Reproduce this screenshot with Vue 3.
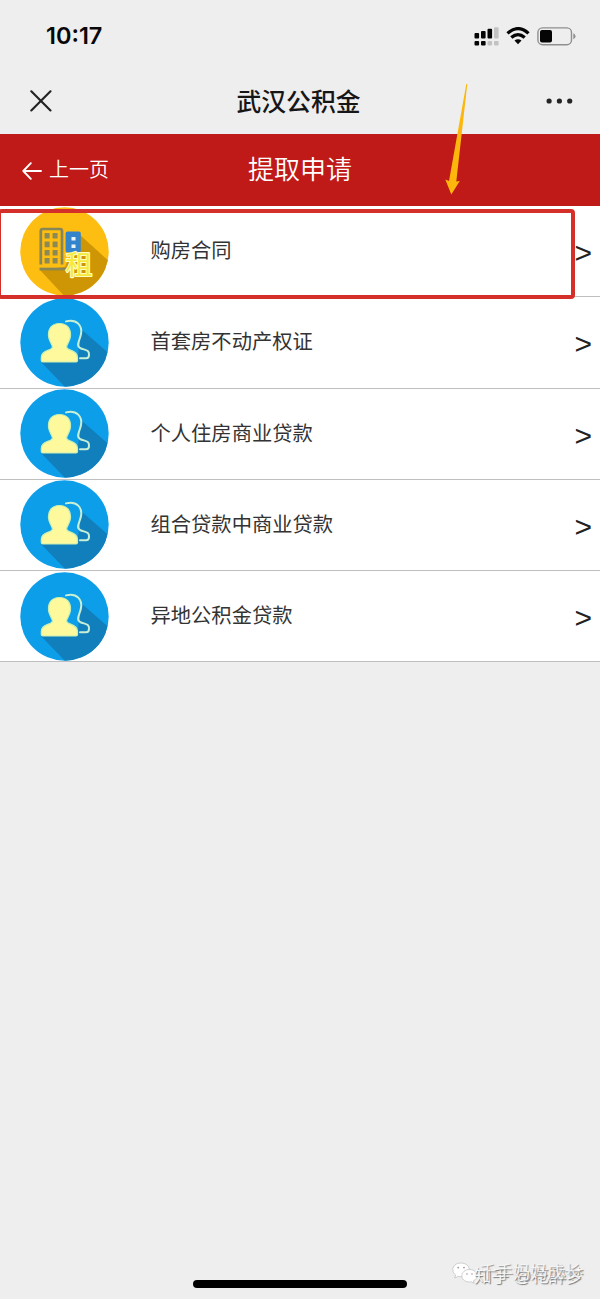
<script setup>
const items = [
  { label: '购房合同', rent: true },
  { label: '首套房不动产权证' },
  { label: '个人住房商业贷款' },
  { label: '组合贷款中商业贷款' },
  { label: '异地公积金贷款' },
]
const windowRows = [26, 34.6, 43, 51]
</script>

<template>
  <div class="screen">
    <header class="status">
      <span class="time">10:17</span>
      <div class="indicators">
        <svg class="signal" width="25" height="19" viewBox="0 0 25 19">
          <g fill="#050505">
            <rect x=".5" y="6" width="4.6" height="5.6" rx="1" />
            <rect x="7" y="4" width="4.6" height="7.6" rx="1" />
            <rect x="13.5" y="1.8" width="4.6" height="9.8" rx="1" />
            <rect x=".5" y="14" width="4.6" height="4.6" rx="1" />
            <rect x="7" y="14" width="4.6" height="4.6" rx="1" />
          </g>
          <g fill="#c2c2c2">
            <rect x="20" y=".2" width="4.6" height="11.4" rx="1" />
            <rect x="13.5" y="14" width="4.6" height="4.6" rx="1" />
            <rect x="20" y="14" width="4.6" height="4.6" rx="1" />
          </g>
        </svg>
        <svg class="wifi" width="24" height="18" viewBox="0 0 24 18">
          <g fill="none" stroke="#050505" stroke-width="3.3">
            <path d="M1.5 6.4Q12-3.1 22.5 6.4" />
            <path d="M5.3 10.6Q12 4.6 18.7 10.6" />
          </g>
          <path d="M8.5 13.6Q12 10.8 15.5 13.6L12 17.3Z" fill="#050505" />
        </svg>
        <svg class="battery" width="39" height="19" viewBox="0 0 39 19">
          <rect x=".9" y=".9" width="33.6" height="16.8" rx="4.6" fill="none" stroke="#8f8f8f" stroke-width="1.4" />
          <rect x="3" y="3" width="12" height="12.4" rx="2" fill="#050505" />
          <path d="M36.3 6.3Q38.5 7.2 38.5 9.3T36.3 12.3Z" fill="#8f8f8f" />
        </svg>
      </div>
    </header>

    <div class="titlebar">
      <svg class="close" width="22" height="22" viewBox="0 0 22 22">
        <path d="M1.3 1.3 20.5 20.5M20.5 1.3 1.3 20.5" stroke="#222" stroke-width="2.1" stroke-linecap="round" />
      </svg>
      <h1>武汉公积金</h1>
      <svg class="more" width="28" height="6" viewBox="0 0 28 6">
        <g fill="#242424"><circle cx="3.1" cy="3" r="2.6" /><circle cx="13.4" cy="3" r="2.6" /><circle cx="23.7" cy="3" r="2.6" /></g>
      </svg>
    </div>

    <nav class="navbar">
      <div class="back">
        <svg width="20" height="18" viewBox="0 0 20 18">
          <path d="M8.8 1.2 1.3 9l7.5 7.8M1.3 9H19" fill="none" stroke="#fff" stroke-width="1.9" stroke-linecap="round" stroke-linejoin="round" />
        </svg>
        <span>上一页</span>
      </div>
      <h2>提取申请</h2>
    </nav>

    <main class="list">
      <div v-for="item in items" :key="item.label" class="row">
        <svg v-if="item.rent" class="icon" viewBox="0 0 89 89">
          <clipPath id="rentDisc"><circle cx="44.5" cy="44.5" r="44.2" /></clipPath>
          <circle cx="44.5" cy="44.5" r="44.2" fill="#fdbd11" />
          <path clip-path="url(#rentDisc)" d="M59 27 92 57V92H47L20 63 45 60Z" fill="#ce9604" />
          <path d="M20.8 57.5V24Q20.8 22 22.8 22H40Q42 22 42 24V57.5" fill="none" stroke="#878658" stroke-width="2.7" />
          <path d="M19.5 62H46" stroke="#878658" stroke-width="2.7" />
          <g fill="#8b8956">
            <template v-for="y in windowRows" :key="y">
              <rect x="24.6" :y="y" width="5" height="5.6" rx=".5" />
              <rect x="32.6" :y="y" width="5" height="5.6" rx=".5" />
            </template>
          </g>
          <rect x="45.6" y="24.5" width="15.2" height="21" rx="2" fill="#3484cb" />
          <path d="M51.5 30h4v3.6h-4zM51.5 37.5h4v3.6h-4z" fill="#e9f5fb" />
          <text class="rent-mark" x="45.5" y="67.5">租</text>
        </svg>
        <svg v-else class="icon" viewBox="0 0 89 89">
          <clipPath id="peopleDisc"><circle cx="44.5" cy="44.5" r="44.2" /></clipPath>
          <circle cx="44.5" cy="44.5" r="44.2" fill="#0d9ee9" />
          <path clip-path="url(#peopleDisc)" d="M61 31 92 58V92H48L21 64 58 57Z" fill="#127fbd" />
          <path d="M46 23.4C57 20.5 62.6 28 61 36C60 42 55.5 47.5 60 50C65 52.3 69.5 51.5 69 57Q69 60.2 66 60.2H60" fill="none" stroke="#c7efd5" stroke-width="2" stroke-linecap="round" />
          <path d="M39.5 25.5C47.5 25.5 51 31 50.5 38C50.2 43 46.8 46 46.6 49C46.6 53 57.5 51.3 57.5 59.5V62.5Q57.5 64 56 64H22.8Q21.3 64 21.3 62.5V59.5C21.3 51.3 32.4 53 32.4 49C32.2 46 28.8 43 28.5 38C28 31 31.5 25.5 39.5 25.5Z" fill="#fdf99c" stroke="#c7efb3" stroke-width="1.2" />
        </svg>
        <span class="label">{{ item.label }}</span>
        <span class="chevron">&gt;</span>
      </div>
      <div class="highlight"></div>
    </main>

    <svg class="pointer" width="34" height="114" viewBox="0 0 34 114">
      <path d="M21.3 1 22.3 1 11.3 98.5 14.8 98 6.3 111.5 .3 96.5 4 98Z" fill="#fdb70c" />
    </svg>

    <div class="watermark">
      <svg width="27" height="22" viewBox="0 0 27 22">
        <g fill="#fff" stroke="#bcbcbc" stroke-width=".7">
          <path d="M9 1C4 1 .8 4 .8 7.7c0 2.3 1.1 4 2.8 5.2L2.8 16l3.3-1.6c5.8 1.5 11.2-1.7 11.2-6.8C17.3 4 13.6 1 9 1Z" />
          <path d="M17.5 7.5c-4.5 0-7.7 2.8-7.7 6.3 0 4.2 4.5 7 9.5 6l2.8 1.5-.7-2.5c2.5-1.3 3.8-3 3.8-5 0-3.5-3.2-6.3-7.7-6.3Z" />
        </g>
        <g fill="#999"><circle cx="6.2" cy="5.6" r=".9" /><circle cx="12" cy="5.6" r=".9" /><circle cx="15" cy="12" r=".8" /><circle cx="20" cy="12" r=".8" /></g>
      </svg>
      <span class="mark-front">知乎 @花醉梦</span>
      <span class="mark-back">千手妈妈成长</span>
    </div>
    <div class="home"></div>
  </div>
</template>

<style>
body { background: #eee; }
</style>

<style scoped>
.screen {
  position: relative;
  height: 1299px;
  overflow: hidden;
  background: #eee;
  color: #333;
  font-family: "Liberation Sans", "Noto Sans CJK SC", sans-serif;
}
h1, h2 { margin: 0; }
.status {
  height: 69px;
  display: flex;
  justify-content: space-between;
  box-sizing: border-box;
  padding: 22px 24px 0 46px;
}
.time { font: 600 23.5px/28px Inter, sans-serif; color: #080808; }
.indicators { display: flex; align-items: flex-start; padding-top: 5px; }
.wifi { margin-left: 7px; }
.battery { margin-left: 7px; }
.titlebar {
  height: 64.5px;
  display: grid;
  grid-template-columns: 1fr auto 1fr;
  align-items: center;
  padding: 0 26px 0 30px;
}
.titlebar h1 { font-size: 24.8px; font-weight: 500; line-height: 36px; color: #161616; margin: 4px 7px 0 0; }
.more { justify-self: end; }
.navbar {
  height: 72.5px;
  display: grid;
  grid-template-columns: 1fr auto 1fr;
  align-items: center;
  background: #c01a18;
  color: #fff;
  padding: 0 22px;
}
.back { display: flex; align-items: center; gap: 7px; font-size: 20px; line-height: 28px; font-weight: 350; }
.back svg { margin-top: 3px; }
.back span { margin-top: 1px; }
.navbar h2 { font-size: 26px; font-weight: 350; line-height: 38px; margin-top: 1px; }
.list { position: relative; }
.row {
  height: 91.25px;
  box-sizing: border-box;
  display: flex;
  align-items: center;
  background: #fff;
  border-bottom: 1px solid #bfbfbf;
  padding: 0 8px 0 20px;
}
.icon { width: 89px; height: 89px; flex: none; }
.rent-mark { font: 400 27px "Noto Sans CJK SC", sans-serif; fill: #f5e93a; stroke: #fffcc0; stroke-width: 2.2px; stroke-linejoin: round; paint-order: stroke; }
.label { flex: 1; margin: 0 0 0 41.5px; font-size: 20.3px; line-height: 30px; }
.chevron { font-size: 30px; line-height: 34px; color: #222; padding-top: 4px; }
.highlight {
  position: absolute;
  left: -2px;
  top: 3px;
  width: 577px;
  height: 90px;
  box-sizing: border-box;
  border: 4px solid #d52f29;
  border-left-width: 3px;
  border-radius: 4px;
}
.pointer { position: absolute; left: 445px; top: 83px; }
.watermark {
  position: absolute;
  left: 452px;
  top: 1262px;
  width: 140px;
  height: 28px;
  color: #f7f7f7;
  text-shadow: 1px 1px 1px #777;
  white-space: nowrap;
}
.watermark svg { position: absolute; left: 0; top: 0; }
.mark-front { position: absolute; left: 22px; top: 2px; font-size: 17.4px; line-height: 24px; }
.mark-back { position: absolute; left: 27px; top: 0; font-size: 17px; line-height: 22px; opacity: .75; }
.home {
  position: absolute;
  left: 193px;
  top: 1280px;
  width: 214px;
  height: 7.5px;
  border-radius: 4px;
  background: #000;
}
</style>
